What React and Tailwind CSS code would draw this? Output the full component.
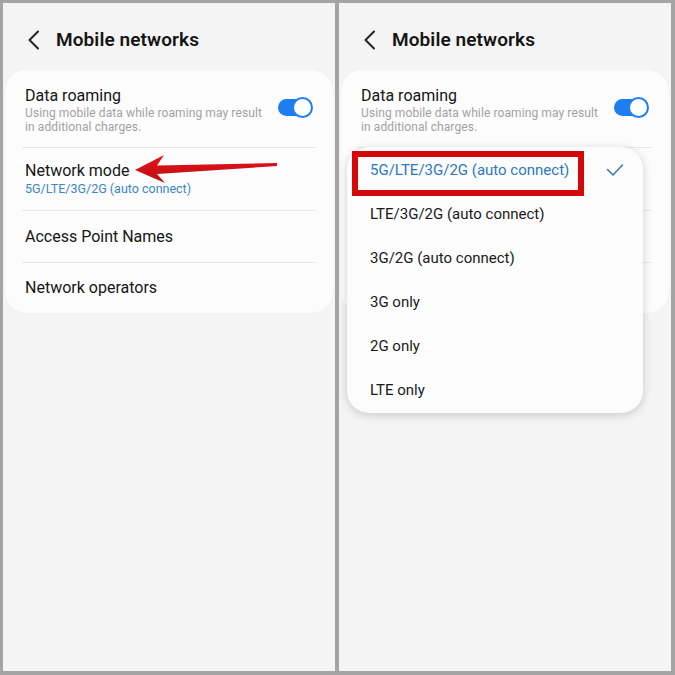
import React from 'react';

const font = { fontFamily: 'Roboto, "Noto Sans", sans-serif' };

function Header() {
  return (
    <div className="h-[67px] flex items-center pl-[24px] gap-[15px] pt-[7px]">
      <svg width="14" height="20" viewBox="0 0 14 20" className="shrink-0">
        <path d="M11 1.5 L2.5 10 L11 18.5" fill="none" stroke="#222" strokeWidth="2" strokeLinecap="round" strokeLinejoin="round" />
      </svg>
      <span className="text-[19px] font-semibold text-[#151515] tracking-[0.1px]">Mobile networks</span>
    </div>
  );
}

function Toggle() {
  return (
    <div className="relative w-[35px] h-[21px] shrink-0 flex items-center">
      <div className="w-[33px] h-[17px] rounded-full bg-[#1c7ef1]" />
      <div className="absolute right-0 top-0 w-[21px] h-[21px] rounded-full bg-white border-[2px] border-[#1c7ef1]" />
    </div>
  );
}

function SettingsCard() {
  return (
    <div className="mx-[2px] h-[243px] bg-[#fcfcfc] rounded-[22px] flex flex-col">
      <div className="h-[77px] mx-[17px] px-[3px] flex items-center justify-between pt-[2px]">
        <div className="flex flex-col">
          <span className="text-[16px] leading-[20px] text-[#161616]">Data roaming</span>
          <span className="text-[12px] leading-[14px] text-[#a2a2a2] w-[245px] tracking-[0.1px]">Using mobile data while roaming may result in additional charges.</span>
        </div>
        <div className="mb-[4px]"><Toggle /></div>
      </div>
      <div className="h-[63px] mx-[17px] px-[3px] border-t border-[#e8e8e8] flex flex-col justify-center">
        <span className="text-[16px] leading-[20px] text-[#161616]">Network mode</span>
        <span className="text-[12.5px] leading-[16px] text-[#3a86c6]">5G/LTE/3G/2G (auto connect)</span>
      </div>
      <div className="h-[52px] mx-[17px] px-[3px] border-t border-[#e8e8e8] flex items-center">
        <span className="text-[16px] text-[#161616]">Access Point Names</span>
      </div>
      <div className="h-[51px] mx-[17px] px-[3px] border-t border-[#e8e8e8] flex items-center">
        <span className="text-[16px] text-[#161616]">Network operators</span>
      </div>
    </div>
  );
}

const options = [
  '5G/LTE/3G/2G (auto connect)',
  'LTE/3G/2G (auto connect)',
  '3G/2G (auto connect)',
  '3G only',
  '2G only',
  'LTE only',
];

function Dropdown() {
  return (
    <div className="absolute left-[8px] top-[144px] w-[296px] h-[266px] bg-[#fcfcfc] rounded-[22px] shadow-[0_2px_10px_rgba(0,0,0,0.18)] flex flex-col pt-[1px]">
      {options.map((o, i) => (
        <div key={o} className="h-[44px] flex items-center justify-between pl-[23px] pr-[19px]">
          <span className={i === 0 ? 'text-[15px] text-[#2d78bd]' : 'text-[15px] text-[#1a1a1a]'}>{o}</span>
          {i === 0 && (
            <svg width="18" height="14" viewBox="0 0 18 14">
              <path d="M1.5 6.5 L7 12 L16.5 2" fill="none" stroke="#3b7cb3" strokeWidth="1.6" strokeLinecap="round" strokeLinejoin="round" />
            </svg>
          )}
        </div>
      ))}
      <div className="absolute left-[5px] top-[4px] w-[232px] h-[45px] border-[6px] border-[#d40808]" />
    </div>
  );
}

function Arrow() {
  return (
    <svg className="absolute left-0 top-0" width="332" height="300" viewBox="3 3 332 300">
      <defs>
        <linearGradient id="ar" x1="0" y1="0" x2="0" y2="1">
          <stop offset="0" stopColor="#e8141c" />
          <stop offset="1" stopColor="#b80d12" />
        </linearGradient>
      </defs>
      <polygon
        points="135,170 164,155 157,165.5 277,163 277,166 157,174 165,183"
        fill="url(#ar)"
      />
    </svg>
  );
}

export default function App() {
  return (
    <div style={font} className="w-[675px] h-[675px] bg-[#a4a4a4] flex gap-[4px] pt-[3px] pl-[3px] pr-[4px] pb-[4px] overflow-hidden">
      <div className="relative w-[332px] h-[668px] bg-[#f4f4f4]">
        <Header />
        <SettingsCard />
        <Arrow />
      </div>
      <div className="relative w-[332px] h-[668px] bg-[#f4f4f4]">
        <Header />
        <SettingsCard />
        <Dropdown />
      </div>
    </div>
  );
}
